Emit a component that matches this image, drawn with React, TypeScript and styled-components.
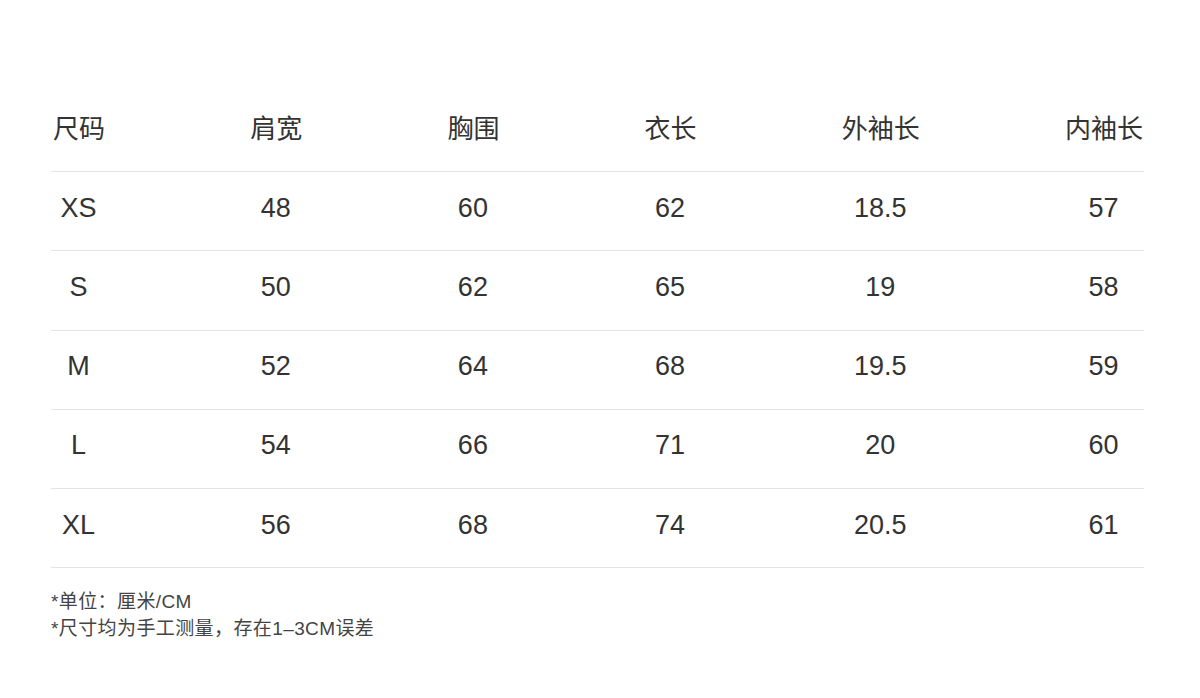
import * as React from 'react';
import styled, { createGlobalStyle } from 'styled-components';

const GlobalStyle = createGlobalStyle`
  html, body {
    margin: 0;
    padding: 0;
    background: #fff;
  }
  body {
    font-family: "Liberation Sans", "Noto Sans CJK SC", sans-serif;
    color: #333;
  }
`;

const headers = ['尺码', '肩宽', '胸围', '衣长', '外袖长', '内袖长'];

const rows = [
  ['XS', '48', '60', '62', '18.5', '57'],
  ['S', '50', '62', '65', '19', '58'],
  ['M', '52', '64', '68', '19.5', '59'],
  ['L', '54', '66', '71', '20', '60'],
  ['XL', '56', '68', '74', '20.5', '61'],
];

const notes = ['*单位：厘米/CM', '*尺寸均为手工测量，存在1–3CM误差'];

export default function App() {
  return (
    <Page>
      <GlobalStyle />
      <SizeTable>
        <HeadRow>
          {headers.map(h => (
            <HeadCell key={h}>{h}</HeadCell>
          ))}
        </HeadRow>
        {rows.map(row => (
          <Row key={row[0]}>
            {row.map((v, i) => (
              <Cell key={i}>{v}</Cell>
            ))}
          </Row>
        ))}
      </SizeTable>
      <Notes>
        {notes.map(n => (
          <Note key={n}>{n}</Note>
        ))}
      </Notes>
    </Page>
  );
}

const Page = styled.div`
  width: 1200px;
  height: 698px;
  box-sizing: border-box;
  padding: 83px 56px 0 51px;
`;

const SizeTable = styled.div`
  display: grid;
  grid-template-columns: repeat(6, auto);
  justify-content: space-between;
`;

const HeadRow = styled.div`
  grid-column: 1 / -1;
  display: grid;
  grid-template-columns: subgrid;
  height: 88px;
  border-bottom: 1px solid #e4e4e4;
`;

const Row = styled.div`
  grid-column: 1 / -1;
  display: grid;
  grid-template-columns: subgrid;
  height: 78.25px;
  border-bottom: 1px solid #e4e4e4;
`;

const HeadCell = styled.div`
  display: flex;
  align-items: center;
  justify-content: center;
  padding: 0 1px 2px 2px;
  font-family: "Noto Sans CJK SC", sans-serif;
  font-size: 26px;
  color: #333;
`;

const Cell = styled.div`
  display: flex;
  align-items: center;
  justify-content: center;
  padding-bottom: 6px;
  font-family: "Liberation Sans", sans-serif;
  font-size: 27px;
  color: #333;
`;

const Notes = styled.div`
  margin-top: 20px;
  font-family: "Liberation Sans", "Noto Sans CJK SC", sans-serif;
  font-size: 19px;
  letter-spacing: 0.4px;
  line-height: 27px;
  color: #444;
`;

const Note = styled.div``;
